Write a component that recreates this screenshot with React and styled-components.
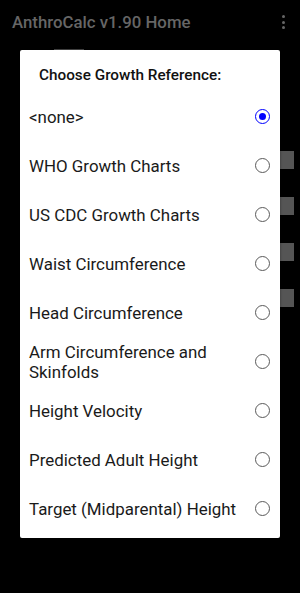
import React, { useState } from "react";
import styled, { createGlobalStyle } from "styled-components";

const Global = createGlobalStyle`
  html, body { margin: 0; padding: 0; background: #000; }
  body { font-family: Roboto, "Noto Sans", sans-serif; }
  * { box-sizing: border-box; }
`;

const Screen = styled.div`
  position: relative;
  width: 300px;
  height: 593px;
  background: #000;
  overflow: hidden;
`;

const AppBar = styled.div`
  height: 44px;
  display: flex;
  align-items: center;
  justify-content: space-between;
  padding: 0 15px 0 12px;
`;

const AppTitle = styled.div`
  color: #666;
  font-size: 16.8px;
  font-weight: 500;
  line-height: 20px;
`;

const Dots = styled.div`
  display: flex;
  flex-direction: column;
  gap: 2.5px;
  span {
    width: 3px;
    height: 3px;
    border-radius: 50%;
    background: #666;
  }
`;

const Content = styled.div`
  position: relative;
  height: calc(593px - 44px);
`;

const Tab = styled.div`
  margin-left: 54px;
  margin-top: 5px;
  width: 30px;
  height: 2px;
  background: #444;
`;

const SideBlocks = styled.div`
  position: absolute;
  right: 6px;
  top: 102px;
  display: flex;
  flex-direction: column;
  gap: 28px;
`;

const Block = styled.div`
  width: 14px;
  height: 18px;
  background: #555;
`;

const Dialog = styled.div`
  position: absolute;
  left: 20px;
  top: 50px;
  width: 260px;
  background: #fff;
  border-radius: 2px;
  padding-bottom: 5px;
  box-shadow: 0 1px 3px rgba(0, 0, 0, 0.4);
`;

const DialogTitle = styled.div`
  padding: 15px 0 7px 19px;
  font-size: 15.3px;
  font-weight: 500;
  line-height: 20px;
  color: #111;
`;

const Option = styled.label`
  display: flex;
  align-items: center;
  justify-content: space-between;
  min-height: 49px;
  padding: 4px 10px 4px 9px;
  cursor: pointer;
`;

const OptionText = styled.span`
  font-size: 16.9px;
  line-height: 20px;
  color: #1a1a1a;
  max-width: 215px;
`;

const Radio = styled.span`
  flex: none;
  width: 15px;
  height: 15px;
  border-radius: 50%;
  border: 1.5px solid ${(p) => (p.$checked ? "#0000ff" : "#5a5a5a")};
  display: flex;
  align-items: center;
  justify-content: center;
  &::after {
    content: "";
    width: 7px;
    height: 7px;
    border-radius: 50%;
    background: ${(p) => (p.$checked ? "#0000ff" : "transparent")};
  }
`;

const options = [
  "<none>",
  "WHO Growth Charts",
  "US CDC Growth Charts",
  "Waist Circumference",
  "Head Circumference",
  "Arm Circumference and Skinfolds",
  "Height Velocity",
  "Predicted Adult Height",
  "Target (Midparental) Height",
];

export default function App() {
  const [sel, setSel] = useState(0);
  return (
    <>
      <Global />
      <Screen>
        <AppBar>
          <AppTitle>AnthroCalc v1.90 Home</AppTitle>
          <Dots>
            <span />
            <span />
            <span />
          </Dots>
        </AppBar>
        <Content>
          <Tab />
          <SideBlocks>
            <Block />
            <Block />
            <Block />
            <Block />
          </SideBlocks>
        </Content>
        <Dialog>
          <DialogTitle>Choose Growth Reference:</DialogTitle>
          {options.map((o, i) => (
            <Option key={o} onClick={() => setSel(i)}>
              <OptionText>{o}</OptionText>
              <Radio $checked={sel === i} />
            </Option>
          ))}
        </Dialog>
      </Screen>
    </>
  );
}
